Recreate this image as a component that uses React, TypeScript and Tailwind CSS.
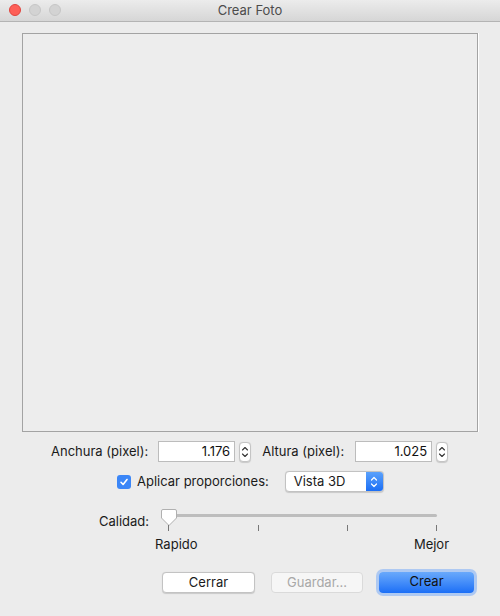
import React from 'react';

const font = { fontFamily: '"Inter", "Noto Sans", "Liberation Sans", sans-serif' };

function Stepper() {
  return (
    <div className="ml-[4px] flex h-[20px] w-[12px] flex-col items-center justify-center rounded-[4px] border border-[#c4c4c4] bg-white shadow-[0_0.5px_1px_rgba(0,0,0,0.15)]">
      <svg width="8" height="14" viewBox="0 0 8 14" fill="none" stroke="#333" strokeWidth="1.1" strokeLinecap="round" strokeLinejoin="round">
        <path d="M1.5 5 L4 2.5 L6.5 5" />
        <path d="M1.5 9 L4 11.5 L6.5 9" />
      </svg>
    </div>
  );
}

function NumField({ value }: { value: string }) {
  return (
    <div className="flex h-[21px] w-[77px] items-center justify-end border border-[#bcbcbc] bg-white pr-[4px] text-[13px] text-[#111]">
      {value}
    </div>
  );
}

export default function App() {
  return (
    <div className="flex h-[616px] w-[500px] flex-col bg-[#ececec] text-[13px] text-[#1a1a1a]" style={font}>
      {/* Title bar */}
      <div className="relative flex h-[22px] shrink-0 items-center justify-center border-b border-[#b4b4b4] bg-gradient-to-b from-[#ececec] to-[#d6d6d6]">
        <div className="absolute left-[9px] top-[4px] flex gap-[8px]">
          <span className="h-[12px] w-[12px] rounded-full border border-[#e0443e] bg-[#fe5f57]" />
          <span className="h-[12px] w-[12px] rounded-full border border-[#c6c6c6] bg-[#d3d3d3]" />
          <span className="h-[12px] w-[12px] rounded-full border border-[#c6c6c6] bg-[#d3d3d3]" />
        </div>
        <span className="text-[13px] text-[#4c4c4c]">Crear Foto</span>
      </div>

      {/* Preview area */}
      <div className="mx-[22px] mt-[11px] h-[399px] border border-[#a3a3a3] bg-[#ededed] shadow-[1px_0_0_#ffffff]" />

      {/* Size row */}
      <div className="mt-[9px] flex items-center pl-[51px]">
        <span>Anchura (pixel):</span>
        <div className="ml-[10px] flex items-center">
          <NumField value="1.176" />
          <Stepper />
        </div>
        <span className="ml-[11px]">Altura (pixel):</span>
        <div className="ml-[11px] flex items-center">
          <NumField value="1.025" />
          <Stepper />
        </div>
      </div>

      {/* Proportions row */}
      <div className="mt-[9px] flex items-center pl-[117px]">
        <div className="flex h-[14px] w-[14px] items-center justify-center rounded-[3px] bg-[#3b86f7]">
          <svg width="10" height="10" viewBox="0 0 10 10" fill="none" stroke="white" strokeWidth="1.6" strokeLinecap="round" strokeLinejoin="round">
            <path d="M2 5.3 L4.1 7.5 L8 2.5" />
          </svg>
        </div>
        <span className="ml-[6px]">Aplicar proporciones:</span>
        <div className="ml-[16px] flex h-[21px] w-[99px] overflow-hidden rounded-[4px] border border-[#c2c2c2] bg-white shadow-[0_0.5px_1px_rgba(0,0,0,0.15)]">
          <span className="flex-1 pl-[8px] leading-[19px]">Vista 3D</span>
          <div className="flex w-[17px] items-center justify-center bg-gradient-to-b from-[#5aa1fb] to-[#1a6ef5]">
            <svg width="8" height="14" viewBox="0 0 8 14" fill="none" stroke="white" strokeWidth="1.2" strokeLinecap="round" strokeLinejoin="round">
              <path d="M1.5 5 L4 2.5 L6.5 5" />
              <path d="M1.5 9 L4 11.5 L6.5 9" />
            </svg>
          </div>
        </div>
      </div>

      {/* Quality slider */}
      <div className="mt-[16px] flex items-start pl-[99px]">
        <span className="mt-[4px]">Calidad:</span>
        <div className="ml-[11px] flex w-[287px] flex-col">
          <div className="relative h-[22px]">
            <div className="absolute left-[8px] right-[10px] top-[6px] h-[3px] rounded-full bg-[#bdbdbd]" />
            <svg className="absolute left-0 top-[0px]" width="18" height="20" viewBox="0 0 18 20">
              <path d="M3 1.5 H15 a1.5 1.5 0 0 1 1.5 1.5 V10 L9 17.5 L1.5 10 V3 a1.5 1.5 0 0 1 1.5 -1.5 Z" fill="white" stroke="#b0b0b0" strokeWidth="1" />
            </svg>
            <div className="absolute left-[8px] top-[17px] h-[6px] w-px bg-[#777]" />
            <div className="absolute left-[98px] top-[17px] h-[6px] w-px bg-[#777]" />
            <div className="absolute left-[187px] top-[17px] h-[6px] w-px bg-[#777]" />
            <div className="absolute left-[276px] top-[17px] h-[6px] w-px bg-[#777]" />
          </div>
          <div className="mt-[5px] flex justify-between">
            <span className="-ml-[5px]">Rapido</span>
            <span className="-mr-[2px]">Mejor</span>
          </div>
        </div>
      </div>

      {/* Buttons */}
      <div className="mt-[17px] flex items-center pl-[162px]">
        <button className="h-[21px] w-[93px] rounded-[4px] border border-[#c3c3c3] bg-white text-[13px] shadow-[0_0.5px_1px_rgba(0,0,0,0.15)]">
          Cerrar
        </button>
        <button className="ml-[16px] h-[21px] w-[92px] rounded-[4px] border border-[#dadada] bg-[#f6f6f6] text-[13px] text-[#a8a8a8]">
          Guardar...
        </button>
        <button className="ml-[16px] h-[21px] w-[95px] rounded-[4px] bg-gradient-to-b from-[#69a9fb] to-[#1a6ef6] text-[13px] text-[#111] shadow-[0_0_0_3px_rgba(100,160,250,0.45)]">
          Crear
        </button>
      </div>
    </div>
  );
}
